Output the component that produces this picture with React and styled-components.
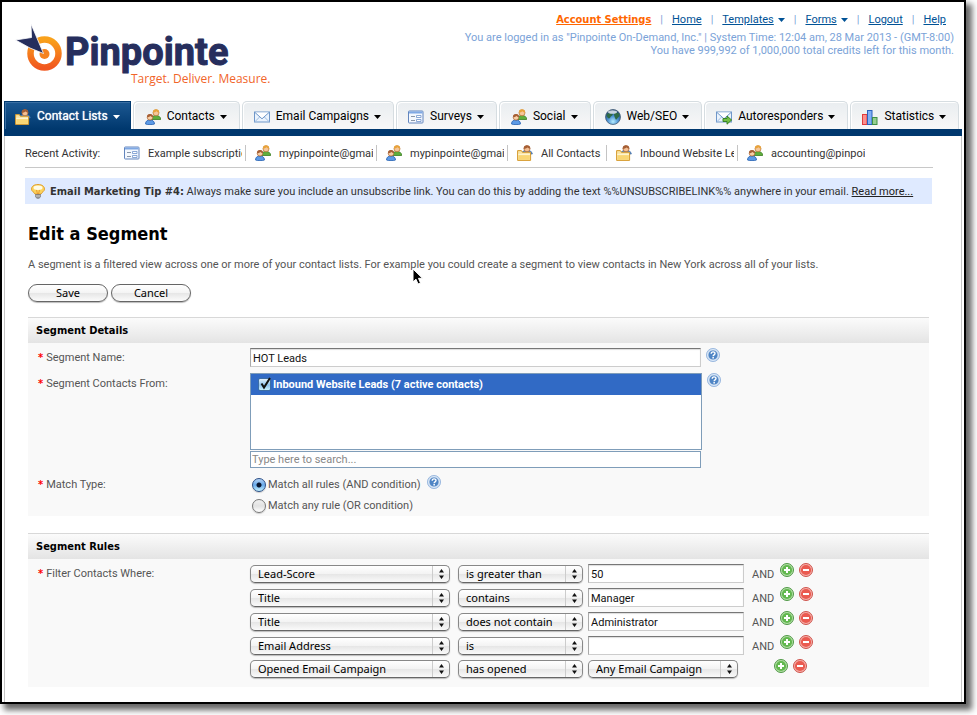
import React from "react";
import styled, { createGlobalStyle, css } from "styled-components";

const bodyFont = "Roboto, sans-serif";
const headingFont = '"DejaVu Sans Condensed", "DejaVu Sans", sans-serif';
const controlFont = '"Noto Sans", "Open Sans", sans-serif';

const GlobalStyle = createGlobalStyle`
  * {
    box-sizing: border-box;
  }
  body {
    margin: 0;
    background: #fff;
    color: #555;
    font-family: ${bodyFont};
    font-size: 11px;
    line-height: 13px;
  }
`;

/* ---------- page frame ---------- */

const Frame = styled.div`
  margin: 0 11px 11px 0;
  padding: 0 2px;
  border: 2px solid #000;
  background: #fff;
  box-shadow: 5px 5px 6px 1px rgba(0, 0, 0, 0.6);
`;
const Header = styled.header`
  display: flex;
  justify-content: space-between;
  height: 99px;
  padding: 11px 8px 0 10px;
`;
const LogoArt = styled.svg`
  flex: none;
  display: block;
  margin-top: 7px;
`;
const Account = styled.div`
  color: #7ba3d8;
  text-align: right;
`;
const TopLinks = styled.nav`
  display: flex;
  justify-content: flex-end;
  gap: 9px;
  padding: 0 8px 5px 0;
`;
const TopLink = styled.a`
  color: #005296;
  ${(p) =>
    p.$hot &&
    css`
      color: #ff6600;
      font-family: ${headingFont};
      font-weight: bold;
    `}
`;
const LinkWithCaret = styled.span`
  display: flex;
  align-items: center;
  gap: 4px;
  color: #005296;
`;

/* ---------- tabs ---------- */

const Tabs = styled.nav`
  display: flex;
  gap: 2px;
  border-bottom: 7px solid #00386e;
`;
const Tab = styled.a`
  display: flex;
  align-items: center;
  height: 28px;
  padding: 2px 12px 0 11px;
  border: 1px solid #d6dde1;
  border-bottom: 0;
  border-radius: 5px 5px 0 0;
  background: linear-gradient(#e9edf0, #f8f8f8);
  box-shadow: inset 1px 1px 0 #fff;
  color: #000;
  font-size: 12px;
  text-decoration: none;
  white-space: nowrap;
  ${(p) =>
    p.$active &&
    css`
      padding: 2px 10px 0;
      border-color: #00386e;
      border-radius: 0;
      background: linear-gradient(#1c5892, #00386e);
      box-shadow: inset 1px 1px 0 #3a6fa3;
      color: #fff;
      text-shadow: 0 0 1px #fff;
    `}
`;
const TabText = styled.span`
  margin: 0 5px 0 6px;
`;

/* ---------- body ---------- */

const Body = styled.main`
  padding: 0 28px 15px 20px;
  border: solid #c4c4c4;
  border-width: 0 1px;
`;
const Recent = styled.div`
  display: flex;
  align-items: center;
  height: 32px;
  padding-top: 3px;
  border-bottom: 1px solid #c8c8c8;
  color: #333;
`;
const RecentLabel = styled.span`
  flex: 0 0 90px;
`;
const RecentItem = styled.a`
  display: flex;
  align-items: center;
  gap: 8px;
  height: 16px;
  padding: 0 3px 0 9px;
  border-right: 1px solid #c4c4c4;
  color: inherit;
  text-decoration: none;
  &:last-child {
    border-right: 0;
  }
`;
const RecentText = styled.span`
  min-width: 62px;
  max-width: 94px;
  overflow: hidden;
  white-space: nowrap;
`;
const Tip = styled.div`
  display: flex;
  align-items: center;
  gap: 4px;
  height: 26px;
  margin: 10px 1px 0 0;
  padding-left: 5px;
  background: #dfeaff;
  color: #333;
  white-space: nowrap;
  b {
    font-family: ${headingFont};
  }
  a {
    color: #222;
  }
`;
const Content = styled.form`
  padding: 0 4px 0 3px;
`;
const Title = styled.h1`
  margin: 19px 0 13px;
  color: #000;
  font-family: ${headingFont};
  font-size: 18px;
  line-height: 22px;
`;
const Description = styled.p`
  position: relative;
  margin: 0 0 13px;
`;
const Cursor = styled.svg`
  position: absolute;
  left: 384px;
  top: 10px;
`;
const Buttons = styled.div`
  display: flex;
  gap: 3px;
`;
const PillButton = styled.button`
  width: 80px;
  height: 18px;
  padding: 0;
  border: 1px solid #666;
  border-radius: 9px;
  background: linear-gradient(#fff 0%, #f4f4f4 49%, #e6e6e6 51%, #fbfbfb 100%);
  box-shadow: 0 1px 1px #bbb;
  color: #000;
  font: 11px/16px ${controlFont};
`;

const Section = styled.section`
  margin-top: ${(p) => p.$top}px;
  padding-bottom: ${(p) => p.$bottom || 0}px;
  background: #f9f9f9;
`;
const SectionTitle = styled.h2`
  margin: 0 0 5px;
  padding: 0 8px;
  border-top: 1px solid #d8d8d8;
  background: linear-gradient(#fbfbfb, #e4e4e4);
  color: #000;
  font-family: ${headingFont};
  font-size: 11px;
  line-height: 25px;
`;
const FieldRow = styled.div`
  display: flex;
  & + & {
    margin-top: 6px;
  }
`;
const FieldLabel = styled.label`
  flex: 0 0 222px;
  padding-left: 10px;
  line-height: ${(p) => (p.$tall ? 22 : 19)}px;
  &::before {
    content: "*";
    margin-right: 3px;
    color: #f00;
    font-family: ${headingFont};
    font-weight: bold;
  }
`;
const Field = styled.div`
  display: flex;
  align-items: flex-start;
  gap: 5px;
`;
const TextInput = styled.input`
  width: ${(p) => p.$width}px;
  height: 19px;
  padding: 1px 2px 0;
  border: 1px solid #ccc;
  border-top-color: #777;
  border-left-color: #aaa;
  background: #fff;
  box-shadow: inset 0 1px 1px #ddd;
  color: #111;
  font: 11px ${bodyFont};
`;
const Picker = styled.div`
  width: 452px;
`;
const ListBox = styled.div`
  height: 77px;
  margin-bottom: 1px;
  border: 1px solid #7f9db9;
  background: #fff;
`;
const ListItem = styled.label`
  display: flex;
  align-items: center;
  gap: 2px;
  height: 21px;
  padding-left: 7px;
  background: #316ac5;
  color: #fff;
  font-weight: bold;
`;
const CheckWrap = styled.span`
  position: relative;
  display: flex;
  svg {
    position: absolute;
    left: 1px;
    top: -1px;
    pointer-events: none;
  }
`;
const Checkbox = styled.input`
  appearance: none;
  width: 13px;
  height: 13px;
  margin: 0;
  border: 1px solid #3d6ea5;
  border-radius: 2px;
  background: linear-gradient(#e3f1fc, #8fc3ef 55%, #c8f0ff);
`;
const SearchInput = styled.input`
  display: block;
  width: 451px;
  height: 17px;
  padding: 0 1px;
  border: 1px solid #7f9db9;
  background: #fff;
  font: 11px ${bodyFont};
  &::placeholder {
    color: #888;
    opacity: 1;
  }
`;
const Choices = styled.div`
  display: flex;
  flex-direction: column;
  padding-left: 2px;
`;
const Choice = styled.div`
  display: flex;
  align-items: center;
  gap: 6px;
  height: 21px;
  svg {
    margin-bottom: 4px;
  }
`;
const ChoiceLabel = styled.label`
  display: flex;
  align-items: center;
  gap: 2px;
`;
const Radio = styled.input`
  appearance: none;
  width: 14px;
  height: 14px;
  margin: 0;
  border: 1px solid #777;
  border-radius: 50%;
  background: linear-gradient(#f0f0f0, #e2e2e2 50%, #fff);
  box-shadow: 0 1px 1px #ccc;
  &:checked {
    border-color: #2c4f86;
    background: radial-gradient(circle at 6px 6px, #0b1730 2px, transparent 3px),
      linear-gradient(#b5d3f5, #68aaea 50%, #c4f2ff);
  }
`;

/* ---------- rules ---------- */

const Rules = styled.div`
  display: flex;
  flex-direction: column;
  gap: 5px;
`;
const Rule = styled.div`
  display: flex;
  align-items: flex-end;
`;
const SelectWrap = styled.span`
  position: relative;
  width: ${(p) => p.$width}px;
  height: 18px;
  margin-right: ${(p) => p.$gap || 0}px;
  svg {
    position: absolute;
    right: 5px;
    top: 3px;
    pointer-events: none;
  }
`;
const SelectBox = styled.select`
  appearance: none;
  display: block;
  width: 100%;
  height: 18px;
  padding: 0 20px 0 7px;
  border: 1px solid #888;
  border-bottom-color: #666;
  border-radius: 5px;
  background: linear-gradient(#ccc, #ccc) right 16px top / 1px 100% no-repeat,
    linear-gradient(#fff 0%, #f3f3f3 49%, #e6e6e6 51%, #fafafa 100%);
  box-shadow: 0 1px 1px #bbb;
  color: #000;
  font: 11px/16px ${controlFont};
`;
const And = styled.span`
  width: 21px;
  margin: 0 7px 0 8px;
  line-height: 17px;
`;
const IconButton = styled.button`
  align-self: flex-start;
  display: block;
  width: 15px;
  height: 15px;
  margin: -1px 4px 0 0;
  padding: 0;
  border: 0;
  background: none;
`;

/* ---------- icons ---------- */

const IconSvg = styled.svg`
  flex: none;
  display: block;
`;

function Caret({ color = "currentColor" }) {
  return (
    <IconSvg width="7" height="4" viewBox="0 0 7 4">
      <path d="M0 0h7L3.5 4z" fill={color} />
    </IconSvg>
  );
}

function PeopleIcon() {
  return (
    <IconSvg width="16" height="16" viewBox="0 0 16 16">
      <path d="M6.500 10.500c0-3 2-4 4.500-4s4.700 1.200 4.700 4z" fill="#5fae3c" stroke="#3a7d22" strokeWidth=".8" />
      <circle cx="11" cy="3.800" r="3" fill="#f6c79a" stroke="#b9742f" strokeWidth=".7" />
      <path d="M7.900 3.800C7.700 1 9.300.3 11 .3s3.400.8 3.100 3.500c-1.500-.3-2.200-1.300-2.700-1.500-.8.9-2 1.300-3.500 1.500z" fill="#e8a33a" />
      <path d="M.5 15c0-3 2-4 4.400-4s4.600 1 4.600 4c-2 .9-7 .9-9 0z" fill="#5c9ae6" stroke="#2460b0" strokeWidth=".8" />
      <circle cx="5" cy="8.300" r="2.800" fill="#f8cfa6" stroke="#a9612f" strokeWidth=".7" />
      <path d="M2 8.300C1.800 5.700 3.300 5 5 5s3.300.8 3 3.300c-1.300-.2-2.100-1-2.600-1.300-.8.800-2 1.200-3.400 1.300z" fill="#a65f35" />
    </IconSvg>
  );
}

function FolderIcon() {
  return (
    <IconSvg width="16" height="16" viewBox="0 0 16 16">
      <path d="M4.500 9c0-2.500 2-3.500 5.200-3.500s5.600 1 5.600 3.500z" fill="#5c8fd6" stroke="#3465a4" strokeWidth=".7" />
      <circle cx="10" cy="3.800" r="3" fill="#f4c095" stroke="#a9612f" strokeWidth=".7" />
      <path d="M6.700 4C6.500 1 8.200.2 10 .2s3.600.9 3.300 3.700c-1.400-.2-2.300-1-2.800-1.300-.9.900-2.200 1.300-3.800 1.400z" fill="#a65f35" />
      <path d="M.6 15.400V5.600h3.800l1 1.700h8.200v8.100z" fill="#f9e3a0" stroke="#d69a2d" />
      <path d="M2 10.300h10.800v4.500H1.300z" fill="#f9d673" />
      <path d="M1.200 9.300H13" stroke="#fff8dc" />
    </IconSvg>
  );
}

function FormIcon() {
  return (
    <IconSvg width="16" height="16" viewBox="0 0 16 16">
      <rect x=".5" y="2" width="14.500" height="12" rx=".8" fill="#f4f8fe" stroke="#6285bd" />
      <path d="M1 3.500h13.500" stroke="#7fa8e4" strokeWidth="2" />
      <path d="M3 7.500h4M3 11.500h4" stroke="#8a97a8" />
      <path d="M8.500 6.500H13v2H8.500zM8.500 10.500H13v2H8.500z" fill="#fff" stroke="#6f93cc" strokeWidth=".8" />
    </IconSvg>
  );
}

function MailIcon({ arrow }) {
  return (
    <IconSvg width="16" height="16" viewBox="0 0 16 16">
      <rect x=".5" y="3" width="15" height="10" fill="#eaf3fd" stroke="#6f97c9" />
      <path d="M1 12.600l5-5M15 12.600l-5-5" stroke="#9dbbe0" fill="none" />
      <path d="M1 3.500L8 9.800l7-6.300" fill="#fff" stroke="#6f97c9" />
      {arrow && <path d="M7 9.500h4V7l4.600 4L11 15.200v-2.700H7z" fill="#74c045" stroke="#2f7d1c" strokeWidth=".9" />}
    </IconSvg>
  );
}

function GlobeIcon() {
  return (
    <IconSvg width="16" height="16" viewBox="0 0 16 16">
      <defs>
        <radialGradient id="globe" cx="50%" cy="80%" r="80%">
          <stop offset="0" stopColor="#b4ecff" />
          <stop offset=".45" stopColor="#4a90d2" />
          <stop offset="1" stopColor="#15365f" />
        </radialGradient>
      </defs>
      <circle cx="8" cy="8" r="7.500" fill="url(#globe)" stroke="#456079" strokeWidth=".8" />
      <path d="M1.500 6C3 3.500 5 4.500 7 4.500c1.500.5.5 2-.5 2.500S5 9.500 4 9.500 2 8 1.500 6zM9 4.500c1.500-1 4-1 5.300.5.500 1.500 0 3-1.300 3.500-1 1.500-2 3-2.500 1.500S9 7.500 9 4.500z" fill="#2f6b46" />
      <ellipse cx="7.500" cy="3" rx="4.500" ry="1.800" fill="#fff" opacity=".75" />
    </IconSvg>
  );
}

function ChartIcon() {
  return (
    <IconSvg width="16" height="16" viewBox="0 0 16 16">
      <rect x=".5" y="5.500" width="4.500" height="10" fill="#fb8f8f" stroke="#e03c3c" />
      <rect x="5.500" y="1.500" width="4.500" height="14" fill="#7fb0f5" stroke="#2a62c0" />
      <rect x="10.500" y="8.500" width="4.500" height="7" fill="#94cf90" stroke="#3f8f45" />
    </IconSvg>
  );
}

function BulbIcon() {
  return (
    <IconSvg width="16" height="16" viewBox="0 0 16 16">
      <path d="M8 1.500c4.200 0 6.500 2 6.500 4.600 0 2.400-2.800 3-3.500 5H5c-.7-2-3.500-2.600-3.500-5C1.500 3.500 3.800 1.500 8 1.500z" fill="#fbd25c" stroke="#e0a030" />
      <ellipse cx="8" cy="4.800" rx="4.500" ry="2.200" fill="#fffbe6" />
      <path d="M6.500 7l1 4h1l1-4" fill="none" stroke="#e8912a" strokeWidth=".8" />
      <path d="M5.500 11.500h5v2.500L9 15.300H7L5.500 14z" fill="#9a9a9a" stroke="#666" strokeWidth=".6" />
      <path d="M5.500 13h5" stroke="#ddd" strokeWidth=".7" />
    </IconSvg>
  );
}

function HelpIcon() {
  return (
    <IconSvg width="15" height="15" viewBox="0 0 15 15" role="img" aria-label="Help">
      <circle cx="7" cy="7" r="6.600" fill="#c9dcf2" stroke="#8fb0da" strokeWidth=".8" />
      <circle cx="7" cy="7" r="5" fill="#4f85c5" stroke="#fff" strokeWidth=".6" />
      <path d="M5.200 5.700c0-2.400 3.800-2.300 3.800-.2 0 1.400-1.900 1.300-1.900 2.700" fill="none" stroke="#fff" strokeWidth="1.400" />
      <rect x="6.400" y="9" width="1.500" height="1.500" fill="#fff" />
    </IconSvg>
  );
}

function RoundIcon({ minus }) {
  const [dark, mid, light] = minus ? ["#c8443c", "#ea5a50", "#f6b0aa"] : ["#3f8f35", "#62b84f", "#b5dfa8"];
  return (
    <IconSvg width="15" height="15" viewBox="0 0 15 15">
      <circle cx="7" cy="7" r="6.500" fill={light} stroke={dark} strokeWidth=".9" />
      <circle cx="7" cy="7" r="5.100" fill={mid} />
      <path d={minus ? "M4 7h6" : "M4 7h6M7 4v6"} stroke="#fff" strokeWidth="2" />
    </IconSvg>
  );
}

function Logo() {
  return (
    <LogoArt width="260" height="70" viewBox="0 0 260 70" role="img" aria-label="Pinpointe">
      <defs>
        <linearGradient id="ring" x1="0" y1="0" x2="0" y2="1">
          <stop offset="0" stopColor="#f9a11b" />
          <stop offset="1" stopColor="#f1581f" />
        </linearGradient>
      </defs>
      <circle cx="30.500" cy="33.500" r="14" fill="none" stroke="url(#ring)" strokeWidth="6.500" />
      <circle cx="30.500" cy="34" r="5" fill="#f5831f" />
      <path d="M29.500 33.500L17 4l.5 13.500L1.500 20l14.500 8z" fill="#262e5d" stroke="#fff" strokeWidth=".8" />
      <text
        x="51"
        y="45"
        fill="#262e5d"
        stroke="#262e5d"
        strokeWidth="1"
        strokeLinejoin="round"
        fontFamily="Roboto, sans-serif"
        fontWeight="bold"
        fontSize="38"
      >
        Pinpointe
      </text>
      <text x="117" y="63" fill="#f1652a" fontFamily="Open Sans, sans-serif" fontSize="12">
        Target. Deliver. Measure.
      </text>
    </LogoArt>
  );
}

/* ---------- data ---------- */

const tabs = [
  ["Contact Lists", <FolderIcon />],
  ["Contacts", <PeopleIcon />],
  ["Email Campaigns", <MailIcon />],
  ["Surveys", <FormIcon />],
  ["Social", <PeopleIcon />],
  ["Web/SEO", <GlobeIcon />],
  ["Autoresponders", <MailIcon arrow />],
  ["Statistics", <ChartIcon />],
];

const recent = [
  ["Example subscription", <FormIcon />],
  ["mypinpointe@gmail.com", <PeopleIcon />],
  ["mypinpointe@gmail.com", <PeopleIcon />],
  ["All Contacts", <FolderIcon />],
  ["Inbound Website Leads", <FolderIcon />],
  ["accounting@pinpointe.com", <PeopleIcon />],
];

const rules = [
  { field: "Lead-Score", test: "is greater than", value: "50" },
  { field: "Title", test: "contains", value: "Manager" },
  { field: "Title", test: "does not contain", value: "Administrator" },
  { field: "Email Address", test: "is", value: "" },
  { field: "Opened Email Campaign", test: "has opened", campaign: "Any Email Campaign" },
];

function Select({ label, value, width, gap }) {
  return (
    <SelectWrap $width={width} $gap={gap}>
      <SelectBox aria-label={label} defaultValue={value}>
        <option>{value}</option>
      </SelectBox>
      <IconSvg width="7" height="12" viewBox="0 0 7 12">
        <path d="M1 4.500L3.500 1 6 4.500zM1 7.500L3.500 11 6 7.500z" fill="#111" />
      </IconSvg>
    </SelectWrap>
  );
}

export default function App() {
  return (
    <>
      <GlobalStyle />
      <Frame>
        <Header>
          <Logo />
          <Account>
            <TopLinks>
              <TopLink href="#" $hot>Account Settings</TopLink>|
              <TopLink href="#">Home</TopLink>|
              <LinkWithCaret>
                <TopLink href="#">Templates</TopLink>
                <Caret />
              </LinkWithCaret>
              |
              <LinkWithCaret>
                <TopLink href="#">Forms</TopLink>
                <Caret />
              </LinkWithCaret>
              |<TopLink href="#">Logout</TopLink>|
              <TopLink href="#">Help</TopLink>
            </TopLinks>
            <div>You are logged in as "Pinpointe On-Demand, Inc." | System Time: 12:04 am, 28 Mar 2013 - (GMT-8:00)</div>
            <div>You have 999,992 of 1,000,000 total credits left for this month.</div>
          </Account>
        </Header>
        <Tabs>
          {tabs.map(([name, icon], i) => (
            <Tab href="#" key={name} $active={i === 0}>
              {icon}
              <TabText>{name}</TabText>
              <Caret />
            </Tab>
          ))}
        </Tabs>
        <Body>
          <Recent>
            <RecentLabel>Recent Activity:</RecentLabel>
            {recent.map(([name, icon], i) => (
              <RecentItem href="#" key={i}>
                {icon}
                <RecentText>{name}</RecentText>
              </RecentItem>
            ))}
          </Recent>
          <Tip>
            <BulbIcon />
            <span>
              <b>Email Marketing Tip #4:</b> Always make sure you include an unsubscribe link. You can do this by adding
              the text %%UNSUBSCRIBELINK%% anywhere in your email. <a href="#">Read more...</a>
            </span>
          </Tip>
          <Content>
            <Title>Edit a Segment</Title>
            <Description>
              A segment is a filtered view across one or more of your contact lists. For example you could create a
              segment to view contacts in New York across all of your lists.
              <Cursor width="12" height="18" viewBox="0 0 12 18">
                <path d="M1 1v13l3-2.800 2 4.800 2.500-1-2-4.700h4z" fill="#000" stroke="#fff" />
              </Cursor>
            </Description>
            <Buttons>
              <PillButton type="button">Save</PillButton>
              <PillButton type="button">Cancel</PillButton>
            </Buttons>

            <Section $top={15}>
              <SectionTitle>Segment Details</SectionTitle>
              <FieldRow>
                <FieldLabel htmlFor="name">Segment Name:</FieldLabel>
                <Field>
                  <TextInput id="name" $width={451} defaultValue="HOT Leads" />
                  <HelpIcon />
                </Field>
              </FieldRow>
              <FieldRow>
                <FieldLabel htmlFor="list-search" $tall>Segment Contacts From:</FieldLabel>
                <Field>
                  <Picker>
                    <ListBox>
                      <ListItem>
                        <CheckWrap>
                          <Checkbox type="checkbox" defaultChecked />
                          <IconSvg width="13" height="13" viewBox="0 0 13 13">
                            <path d="M2.500 6.500L5 10.500 11 1" fill="none" stroke="#111" strokeWidth="2" />
                          </IconSvg>
                        </CheckWrap>
                        Inbound Website Leads (7 active contacts)
                      </ListItem>
                    </ListBox>
                    <SearchInput id="list-search" placeholder="Type here to search..." />
                  </Picker>
                  <HelpIcon />
                </Field>
              </FieldRow>
              <FieldRow>
                <FieldLabel as="span" $tall>Match Type:</FieldLabel>
                <Choices role="radiogroup" aria-label="Match Type">
                  <Choice>
                    <ChoiceLabel>
                      <Radio type="radio" name="match" defaultChecked />
                      Match all rules (AND condition)
                    </ChoiceLabel>
                    <HelpIcon />
                  </Choice>
                  <Choice>
                    <ChoiceLabel>
                      <Radio type="radio" name="match" />
                      Match any rule (OR condition)
                    </ChoiceLabel>
                  </Choice>
                </Choices>
              </FieldRow>
            </Section>

            <Section $top={17} $bottom={9}>
              <SectionTitle>Segment Rules</SectionTitle>
              <FieldRow>
                <FieldLabel as="span">Filter Contacts Where:</FieldLabel>
                <Rules>
                  {rules.map((r, i) => (
                    <Rule key={i}>
                      <Select label="Field" value={r.field} width={200} gap={8} />
                      <Select label="Condition" value={r.test} width={125} gap={5} />
                      {r.campaign ? (
                        <Select label="Campaign" value={r.campaign} width={150} />
                      ) : (
                        <TextInput aria-label="Value" $width={156} defaultValue={r.value} />
                      )}
                      <And>{r.campaign ? "" : "AND"}</And>
                      <IconButton type="button" aria-label="Add rule">
                        <RoundIcon />
                      </IconButton>
                      <IconButton type="button" aria-label="Remove rule">
                        <RoundIcon minus />
                      </IconButton>
                    </Rule>
                  ))}
                </Rules>
              </FieldRow>
            </Section>
          </Content>
        </Body>
      </Frame>
    </>
  );
}
